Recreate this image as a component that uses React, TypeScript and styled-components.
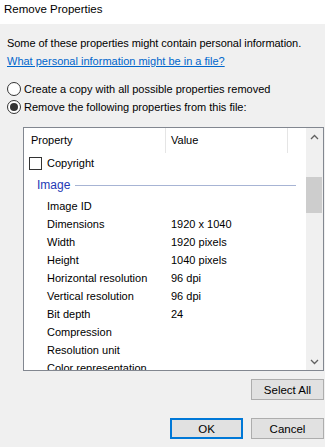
import React from "react";
import styled, { createGlobalStyle } from "styled-components";

const FONT = `"Liberation Sans", Arial, sans-serif`;

const GlobalStyle = createGlobalStyle`
  html, body {
    margin: 0;
    padding: 0;
    background: #f0f0f0;
  }
  body {
    font-family: ${FONT};
    font-size: 11px;
    color: #000;
  }
`;

const rows: { name: string; value?: string }[] = [
  { name: "Image ID" },
  { name: "Dimensions", value: "1920 x 1040" },
  { name: "Width", value: "1920 pixels" },
  { name: "Height", value: "1040 pixels" },
  { name: "Horizontal resolution", value: "96 dpi" },
  { name: "Vertical resolution", value: "96 dpi" },
  { name: "Bit depth", value: "24" },
  { name: "Compression" },
  { name: "Resolution unit" },
  { name: "Color representation" },
];

export default function App() {
  return (
    <Window>
      <GlobalStyle />
      <TitleBar>Remove Properties</TitleBar>
      <Body>
        <Intro>Some of these properties might contain personal information.</Intro>
        <Link>What personal information might be in a file?</Link>
        <Options>
          <RadioRow>
            <Radio />
            Create a copy with all possible properties removed
          </RadioRow>
          <RadioRow>
            <Radio checked />
            Remove the following properties from this file:
          </RadioRow>
        </Options>
        <ListBox>
          <ListMain>
            <Header>
              <HeaderCell width={142} pad={7}>Property</HeaderCell>
              <HeaderCell width={122} pad={5}>Value</HeaderCell>
              <HeaderCell width={19} pad={0} />
            </Header>
            <Rows>
              <CheckRow>
                <Checkbox />
                Copyright
              </CheckRow>
              <GroupRow>
                <span>Image</span>
                <GroupLine />
              </GroupRow>
              {rows.map((r) => (
                <PropRow key={r.name}>
                  <PropName>{r.name}</PropName>
                  <span>{r.value}</span>
                </PropRow>
              ))}
            </Rows>
          </ListMain>
          <ScrollBar>
            <Arrow>
              <svg width="9" height="6" viewBox="0 0 9 6">
                <path d="M1 5 L4.5 1.5 L8 5" fill="none" stroke="#606060" strokeWidth="1.3" />
              </svg>
            </Arrow>
            <Track>
              <Thumb />
            </Track>
            <Arrow>
              <svg width="9" height="6" viewBox="0 0 9 6">
                <path d="M1 1 L4.5 4.5 L8 1" fill="none" stroke="#606060" strokeWidth="1.3" />
              </svg>
            </Arrow>
          </ScrollBar>
        </ListBox>
        <SelectAllRow>
          <Button>Select All</Button>
        </SelectAllRow>
        <Footer>
          <Button primary>OK</Button>
          <Button>Cancel</Button>
        </Footer>
      </Body>
    </Window>
  );
}

const Window = styled.div`
  width: 325px;
  height: 447px;
  overflow: hidden;
  background: #f0f0f0;
  white-space: nowrap;
`;

const TitleBar = styled.div`
  height: 24px;
  background: #fff;
  padding: 1px 0 0 4px;
  box-sizing: border-box;
  line-height: 16px;
  font-size: 11.5px;
`;

const Body = styled.div`
  padding: 10px 1px 0 7px;
`;

const Intro = styled.div`
  height: 18px;
  line-height: 18px;
  letter-spacing: -0.05px;
`;

const Link = styled.div`
  height: 18px;
  line-height: 18px;
  color: #0066cc;
  text-decoration: underline;
`;

const Options = styled.div`
  margin-top: 10px;
  display: flex;
  flex-direction: column;
`;

const RadioRow = styled.div`
  display: flex;
  align-items: center;
  height: 18px;
  gap: 3px;
`;

const Radio = styled.span<{ checked?: boolean }>`
  width: 14px;
  height: 14px;
  box-sizing: border-box;
  border: 1px solid #333;
  border-radius: 50%;
  background: #fff;
  display: flex;
  align-items: center;
  justify-content: center;
  &::after {
    content: "";
    width: 8px;
    height: 8px;
    border-radius: 50%;
    background: ${(p) => (p.checked ? "#333" : "transparent")};
  }
`;

const ListBox = styled.div`
  margin: 11px 0 0 16px;
  height: 244px;
  box-sizing: border-box;
  border: 1px solid #828790;
  background: #fff;
  display: flex;
`;

const ListMain = styled.div`
  flex: 1;
  overflow: hidden;
  display: flex;
  flex-direction: column;
`;

const Header = styled.div`
  display: flex;
  height: 25px;
  flex-shrink: 0;
`;

const HeaderCell = styled.div<{ width: number; pad: number }>`
  width: ${(p) => p.width}px;
  box-sizing: border-box;
  flex-shrink: 0;
  padding-left: ${(p) => p.pad}px;
  line-height: 25px;
  border-right: 1px solid #e5e5e5;
  &:last-child {
    border-right: none;
  }
`;

const Rows = styled.div`
  display: flex;
  flex-direction: column;
`;

const CheckRow = styled.div`
  display: flex;
  align-items: center;
  height: 20px;
  padding-left: 5px;
  gap: 5px;
`;

const Checkbox = styled.span`
  width: 13px;
  height: 13px;
  box-sizing: border-box;
  border: 1px solid #333;
  background: #fff;
`;

const GroupRow = styled.div`
  display: flex;
  align-items: center;
  height: 24px;
  padding: 0 10px 0 13px;
  gap: 5px;
  color: #2339b5;
  font-size: 12px;
`;

const GroupLine = styled.div`
  flex: 1;
  height: 1px;
  background: #a7b4d4;
`;

const PropRow = styled.div`
  display: flex;
  flex-shrink: 0;
  height: 18px;
  line-height: 18px;
  padding-left: 23px;
`;

const PropName = styled.span`
  width: 124px;
  flex-shrink: 0;
`;

const ScrollBar = styled.div`
  width: 17px;
  background: #f0f0f0;
  display: flex;
  flex-direction: column;
`;

const Arrow = styled.div`
  height: 17px;
  display: flex;
  align-items: center;
  justify-content: center;
`;

const Track = styled.div`
  flex: 1;
  padding-top: 32px;
`;

const Thumb = styled.div`
  height: 36px;
  margin: 0 1px 0 0;
  background: #cdcdcd;
`;

const SelectAllRow = styled.div`
  margin-top: 8px;
  display: flex;
  justify-content: flex-end;
`;

const Footer = styled.div`
  margin-top: 18px;
  display: flex;
  justify-content: flex-end;
  gap: 8px;
`;

const Button = styled.button<{ primary?: boolean }>`
  width: 73px;
  height: 21px;
  box-sizing: border-box;
  padding: 0;
  font-family: ${FONT};
  font-size: 11.5px;
  color: #000;
  background: #e1e1e1;
  border: ${(p) => (p.primary ? "2px solid #0078d7" : "1px solid #adadad")};
  border-radius: 0;
`;
